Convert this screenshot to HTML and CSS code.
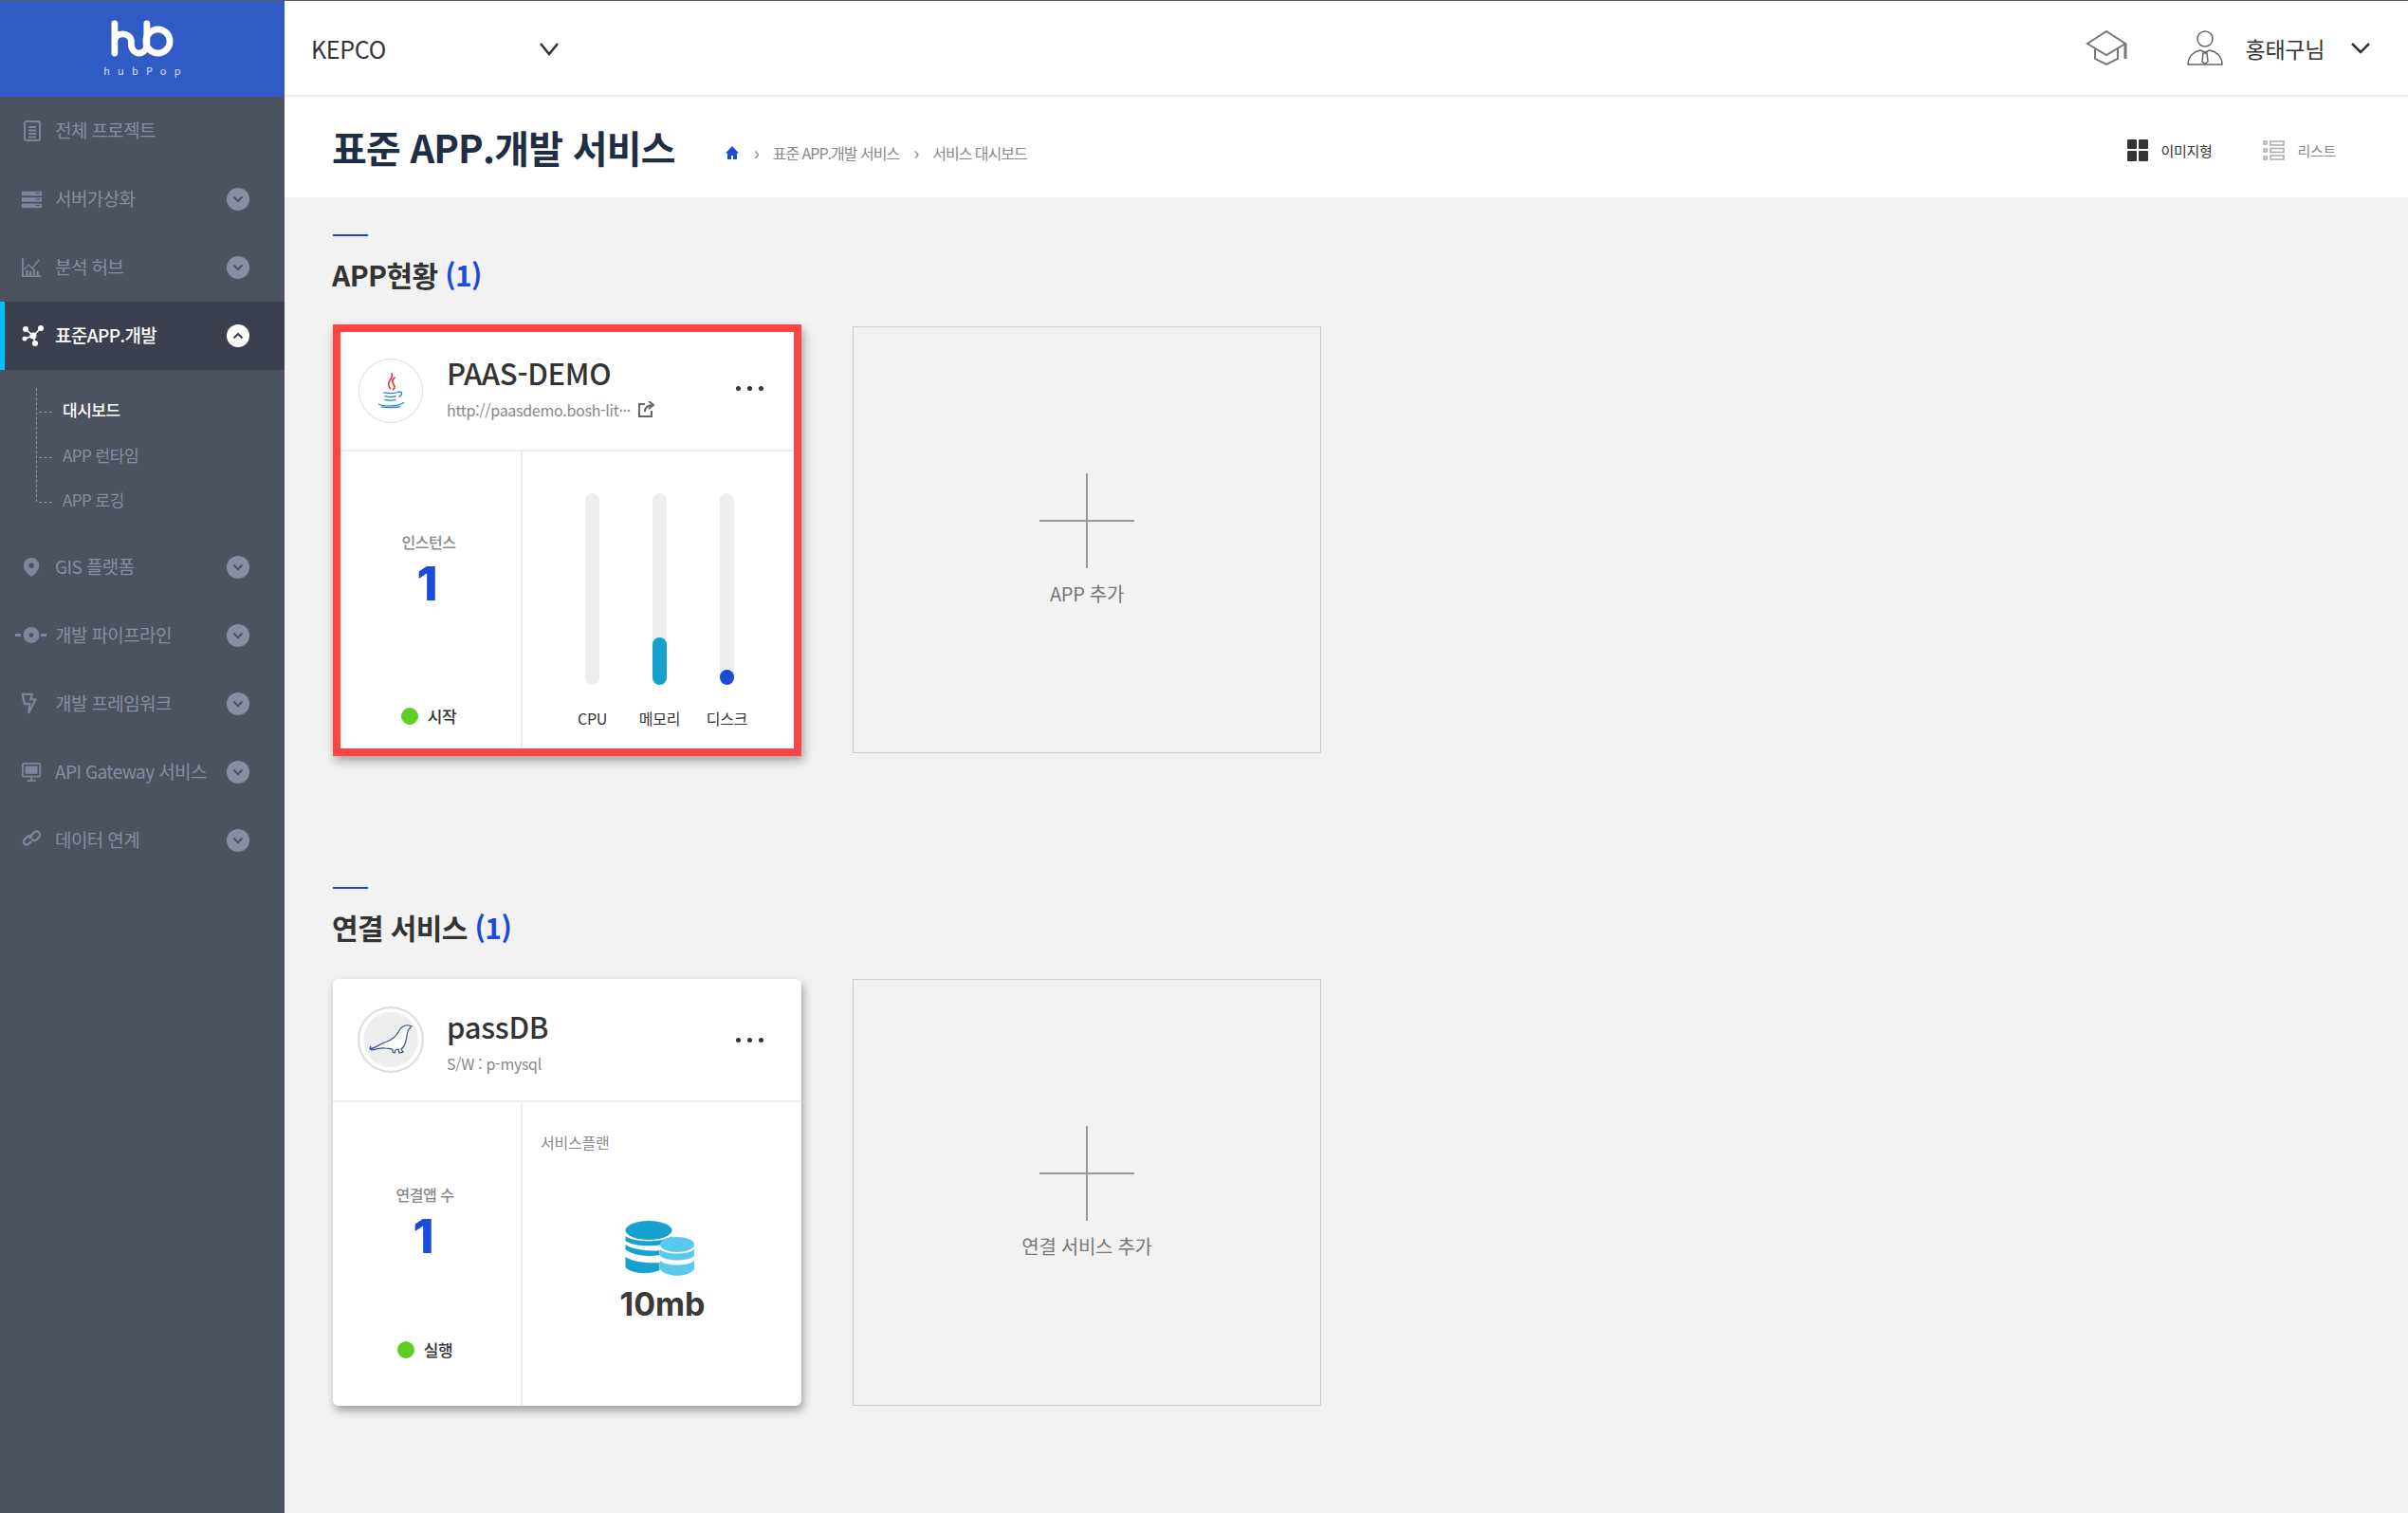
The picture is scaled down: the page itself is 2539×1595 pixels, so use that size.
FILE: index.html
```html
<!DOCTYPE html>
<html lang="ko">
<head>
  <meta charset="utf-8">
  <title>표준 APP.개발 서비스</title>
  <link rel="stylesheet" href="styles.css">
</head>
<body>
<div class="layout">
  <aside class="sidebar">
    <div class="logo">
      <svg class="logo-mark" width="66" height="39" viewBox="0 0 68 40" fill="none" stroke="#fff" stroke-width="7" stroke-linecap="round" stroke-linejoin="round">
        <path d="M4 4V36M4 22C5 13 20 13 22 22V27C23 39 38 39 39 27V4"/>
        <circle cx="51" cy="23" r="13"/>
      </svg>
      <div class="logo-text">hubPop</div>
    </div>
    <ul class="menu">
      <li class="menu-item">
        <svg class="menu-icon" width="22" height="24" viewBox="0 0 22 24" fill="none" stroke="#7d869f" stroke-width="2"><rect x="3" y="2" width="16" height="20" rx="2"/><path d="M7 8h8M7 11.500h8M7 15h8M7 18.500h8M8 2h6"/></svg>
        <span class="menu-label">전체 프로젝트</span>
      </li>
      <li class="menu-item">
        <svg class="menu-icon" width="22" height="24" viewBox="0 0 24 24" fill="#7d869f"><rect x="0" y="3" width="23" height="5"/><rect x="0" y="10" width="23" height="5"/><rect x="0" y="17" width="23" height="5"/><path d="M16 5h5M16 12h5M16 19h5" stroke="#4d5260" stroke-width="1"/></svg>
        <span class="menu-label">서버가상화</span>
        <span class="toggle"><svg width="12" height="8" viewBox="0 0 12 8" fill="none" stroke="#4d5260" stroke-width="2"><path d="M1.500 1.500 6 6l4.500-4.500"/></svg></span>
      </li>
      <li class="menu-item">
        <svg class="menu-icon" width="22" height="24" viewBox="0 0 24 24" fill="none" stroke="#7d869f" stroke-width="2"><path d="M1 1v21h21"/><path d="M3 14l5-5 4 4 8-10" stroke-width="1.500"/><path d="M6 21v-6M10 21v-5M14 21v-7M18 21v-5" stroke-width="2.500"/></svg>
        <span class="menu-label">분석 허브</span>
        <span class="toggle"><svg width="12" height="8" viewBox="0 0 12 8" fill="none" stroke="#4d5260" stroke-width="2"><path d="M1.500 1.500 6 6l4.500-4.500"/></svg></span>
      </li>
      <li class="menu-item active">
        <svg class="menu-icon" width="24" height="24" viewBox="0 0 24 24" fill="#fff"><path d="M4 5l8 7 8-8M3 15l9-3 2 8" fill="none" stroke="#fff" stroke-width="1.500"/><circle cx="4" cy="5" r="3"/><circle cx="20" cy="4" r="3"/><circle cx="12" cy="12" r="3.500"/><circle cx="3" cy="15" r="2.500"/><circle cx="14" cy="20" r="3"/></svg>
        <span class="menu-label">표준APP.개발</span>
        <span class="toggle"><svg width="12" height="8" viewBox="0 0 12 8" fill="none" stroke="#3b3f50" stroke-width="2"><path d="M1.500 6.500 6 2l4.500 4.500"/></svg></span>
      </li>
      <li class="submenu">
        <div class="sub-item current">대시보드</div>
        <div class="sub-item">APP 런타임</div>
        <div class="sub-item">APP 로깅</div>
      </li>
      <li class="menu-item">
        <svg class="menu-icon" width="22" height="24" viewBox="-2 0 24 24" fill="#7d869f"><path fill-rule="evenodd" d="M9 1a9 9 0 0 1 9 9c0 5-5 10-9 13C5 20 0 15 0 10a9 9 0 0 1 9-9zm0 6a3 3 0 1 0 0 6 3 3 0 0 0 0-6z"/></svg>
        <span class="menu-label">GIS 플랫폼</span>
        <span class="toggle"><svg width="12" height="8" viewBox="0 0 12 8" fill="none" stroke="#4d5260" stroke-width="2"><path d="M1.500 1.500 6 6l4.500-4.500"/></svg></span>
      </li>
      <li class="menu-item">
        <svg class="menu-icon pipe" width="34" height="24" viewBox="0 0 34 24" fill="#7d869f"><path d="M0 10h6v3H0zM27 10h6v3h-6z"/><path fill-rule="evenodd" d="M17 3a8.500 8.500 0 1 1 0 17 8.500 8.500 0 0 1 0-17zm0 6a2.500 2.500 0 1 0 0 5 2.500 2.500 0 0 0 0-5z"/></svg>
        <span class="menu-label">개발 파이프라인</span>
        <span class="toggle"><svg width="12" height="8" viewBox="0 0 12 8" fill="none" stroke="#4d5260" stroke-width="2"><path d="M1.500 1.500 6 6l4.500-4.500"/></svg></span>
      </li>
      <li class="menu-item">
        <svg class="menu-icon" width="22" height="24" viewBox="0 0 24 24" fill="none" stroke="#7d869f" stroke-width="2.500" stroke-linejoin="round"><path d="M1 1h11l-2 6h6l-8 15 1-10H3z"/></svg>
        <span class="menu-label">개발 프레임워크</span>
        <span class="toggle"><svg width="12" height="8" viewBox="0 0 12 8" fill="none" stroke="#4d5260" stroke-width="2"><path d="M1.500 1.500 6 6l4.500-4.500"/></svg></span>
      </li>
      <li class="menu-item">
        <svg class="menu-icon" width="22" height="24" viewBox="0 0 24 24" fill="none" stroke="#7d869f" stroke-width="2"><rect x="1" y="2" width="20" height="15" rx="1.500"/><rect x="5" y="6" width="12" height="7" fill="#7d869f"/><path d="M11 17v4M6 22h10"/></svg>
        <span class="menu-label">API Gateway 서비스</span>
        <span class="toggle"><svg width="12" height="8" viewBox="0 0 12 8" fill="none" stroke="#4d5260" stroke-width="2"><path d="M1.500 1.500 6 6l4.500-4.500"/></svg></span>
      </li>
      <li class="menu-item">
        <svg class="menu-icon" width="22" height="24" viewBox="0 0 24 24" fill="none" stroke="#7d869f" stroke-width="2.500" stroke-linecap="round"><path d="M10 14l-2 2a3.500 3.500 0 0 1-5-5l3-3a3.500 3.500 0 0 1 5 0"/><path d="M9 9l2-3 3-3a3.500 3.500 0 0 1 6 5l-3 3a3.500 3.500 0 0 1-5 0"/></svg>
        <span class="menu-label">데이터 연계</span>
        <span class="toggle"><svg width="12" height="8" viewBox="0 0 12 8" fill="none" stroke="#4d5260" stroke-width="2"><path d="M1.500 1.500 6 6l4.500-4.500"/></svg></span>
      </li>
    </ul>
  </aside>

  <div class="main">
    <header class="topbar">
      <div class="org">
        <span class="org-name">KEPCO</span>
        <svg width="22" height="16" viewBox="0 0 22 16" fill="none" stroke="#333" stroke-width="2.500"><path d="M2 3l9 11 9-11"/></svg>
      </div>
      <div class="top-right">
        <svg class="grad" width="46" height="38" viewBox="0 0 46 38" fill="none" stroke="#777" stroke-width="2"><path d="M22 1 2 14l20 12 20-12zM10 19v11l12 6 12-6V19"/><path d="M42 14v16" stroke-width="3"/></svg>
        <svg class="user" width="38" height="38" viewBox="0 0 38 38" fill="none" stroke="#666" stroke-width="1.500"><circle cx="19" cy="9" r="8"/><path d="M1 36c0-9 7-14 13-15l5 2 5-2c6 1 13 6 13 15zM17 24h4l1 9-3 2-3-2z"/></svg>
        <span class="user-name">홍태구님</span>
        <svg width="22" height="14" viewBox="0 0 22 14" fill="none" stroke="#333" stroke-width="2.500"><path d="M2 2l9 9 9-9"/></svg>
      </div>
    </header>

    <div class="titlebar">
      <h1 class="page-title">표준 APP.개발 서비스</h1>
      <nav class="crumbs">
        <svg width="16" height="16" viewBox="0 0 16 16" fill="#1a4bdb"><path d="M8 1 1 8.500h2V15h4v-4h2v4h4V8.500h2z"/></svg>
        <span class="sep">›</span>
        <span>표준 APP.개발 서비스</span>
        <span class="sep">›</span>
        <span>서비스 대시보드</span>
      </nav>
      <div class="views">
        <span class="view on">
          <svg width="22" height="23" viewBox="0 0 22 23" fill="#333"><rect width="10" height="10" rx="1"/><rect x="12" width="10" height="10" rx="1"/><rect y="12" width="10" height="11" rx="1"/><rect x="12" y="12" width="10" height="11" rx="1"/></svg>
          이미지형
        </span>
        <span class="view">
          <svg width="23" height="21" viewBox="0 0 23 21" fill="none" stroke="#aaa" stroke-width="1.500"><path d="M1 1h3v3H1zM1 9h3v3H1zM1 17h3v3H1zM8 1h14v4H8zM8 8.500h14v4H8zM8 16h14v4H8z"/></svg>
          리스트
        </span>
      </div>
    </div>

    <section class="section first">
      <h2 class="section-title">APP현황 <em>(1)</em></h2>
      <div class="cards">
        <article class="card marked">
          <div class="card-head">
            <span class="avatar">
              <svg width="30" height="40" viewBox="0 0 32 42" fill="none" stroke="#2f7fc1" stroke-width="1.300"><path d="M17 1c3 6-6 9-3 15 1 2 2 3 2 3M21 6c-5 3-3 6-1 9 1 2 0 4-2 5" stroke="#e1292b" stroke-width="1.600"/><path d="M8 23c5 1 13 1 17-1 4 0 5 3 0 6M9 27c4 1 9 1 13 0M9 31c4 1 9 1 13 0M2 36c6 3 22 3 29-2M5 39c7 1 15 1 22 0"/></svg>
            </span>
            <div class="card-info">
              <div class="card-name">PAAS-DEMO</div>
              <div class="card-sub">http://paasdemo.bosh-lit···
                <svg width="18" height="18" viewBox="0 0 18 18" fill="none" stroke="#666" stroke-width="2"><path d="M8 3H2v13h13v-6M8 11c0-5 3-7 9-7M12 0l5 4-5 4"/></svg>
              </div>
            </div>
            <span class="dots"><i></i><i></i><i></i></span>
          </div>
          <div class="card-body">
            <div class="stat">
              <div class="stat-label">인스턴스</div>
              <div class="stat-num">1</div>
              <div class="status"><i class="dot"></i>시작</div>
            </div>
            <div class="gauges">
              <div class="gauge"><div class="bar"></div><span>CPU</span></div>
              <div class="gauge"><div class="bar"><i class="fill mem"></i></div><span>메모리</span></div>
              <div class="gauge"><div class="bar"><i class="fill disk"></i></div><span>디스크</span></div>
            </div>
          </div>
        </article>
        <div class="add"><i class="plus"></i><span>APP 추가</span></div>
      </div>
    </section>

    <section class="section">
      <h2 class="section-title">연결 서비스 <em>(1)</em></h2>
      <div class="cards">
        <article class="card">
          <div class="card-head">
            <span class="avatar grey">
              <svg width="46" height="34" viewBox="0 0 46 34" fill="#fff" stroke="#3b4f86" stroke-width="1.200"><path d="M1 27c6-1 11-6 18-8 5-2 9-4 12-10 2-5 7-8 11-7l3 1-3 3c-2 3-2 9-3 12-1 4-2 7-5 9l2 3-4 1-1-4-3 1-1 3-2-1v-3c-3 0-5-1-7-1-6-1-9 1-15 2-1-1-2-3-1-4z"/></svg>
            </span>
            <div class="card-info">
              <div class="card-name">passDB</div>
              <div class="card-sub">S/W : p-mysql</div>
            </div>
            <span class="dots"><i></i><i></i><i></i></span>
          </div>
          <div class="card-body">
            <div class="stat">
              <div class="stat-label">연결앱 수</div>
              <div class="stat-num">1</div>
              <div class="status"><i class="dot"></i>실행</div>
            </div>
            <div class="plan">
              <div class="plan-label">서비스플랜</div>
              <svg class="db" width="74" height="60" viewBox="0 0 74 60">
                <g fill="#17a1cf"><ellipse cx="25" cy="10" rx="24.500" ry="10"/><path d="M0.500 16c8 7 41 7 49 0v5c-8 7-41 7-49 0zM0.500 25c8 7 38 7 36 6v5c-12 2-28 1-36-6zM0.500 38c8 6 28 7 36 6v8c-10 5-30 4-36-3z"/></g>
                <g fill="#5cc8ee"><ellipse cx="55" cy="25" rx="18" ry="8"/><path d="M37 30c6 6 30 6 36 0v7c-6 6-30 6-36 0zM37 42c6 6 30 6 36 0v9c-6 9-30 9-36 0z"/></g>
              </svg>
              <div class="plan-size">10mb</div>
            </div>
          </div>
        </article>
        <div class="add"><i class="plus"></i><span>연결 서비스 추가</span></div>
      </div>
    </section>
  </div>
</div>
</body>
</html>
```

FILE: styles.css
```css
* {
  box-sizing: border-box;
}
html, body {
  margin: 0;
  padding: 0;
}
body {
  font-family: "Noto Sans CJK KR", "Noto Sans", sans-serif;
  color: #333;
  background: #f2f2f2;
}
ul {
  list-style: none;
  margin: 0;
  padding: 0;
}
.layout {
  display: flex;
  min-height: 1595px;
  border-top: 1px solid #555a66;
}
.sidebar {
  width: 300px;
  flex: none;
  background: #4d5260;
}
.logo {
  height: 101px;
  background: #315bc4;
  display: flex;
  flex-direction: column;
  align-items: center;
  padding-top: 20px;
}
.logo-text {
  color: #d8e0f5;
  font-size: 11px;
  letter-spacing: 8.2px;
  line-height: 12px;
  margin-top: 8px;
  margin-left: 8px;
}
.menu-item {
  height: 72px;
  display: flex;
  align-items: center;
  padding-left: 23px;
  position: relative;
  color: #868ea6;
  font-size: 19px;
  letter-spacing: -0.6px;
}
.menu-label {
  padding-bottom: 4px;
}
.menu-icon {
  flex: none;
  margin-right: 13px;
}
.menu-icon.pipe {
  margin-left: -7px;
  margin-right: 8px;
}
.toggle {
  position: absolute;
  left: 239px;
  top: 24px;
  width: 24px;
  height: 24px;
  border-radius: 50%;
  background: #868ea6;
  display: flex;
  align-items: center;
  justify-content: center;
}
.menu-item.active {
  background: #3b3f50;
  border-left: 5px solid #00c0ff;
  padding-left: 18px;
  color: #fff;
  font-weight: 500;
}
.menu-item.active .menu-icon {
  margin-right: 11px;
}
.active .toggle {
  left: 234px;
  background: #fff;
}
.submenu {
  height: 172px;
  padding-top: 18px;
  position: relative;
}
.submenu:before {
  content: "";
  position: absolute;
  left: 38px;
  top: 19px;
  height: 120px;
  border-left: 1px dashed #8a90a2;
}
.sub-item {
  height: 47.500px;
  line-height: 47.500px;
  padding-left: 66px;
  color: #868ea6;
  font-size: 17px;
  letter-spacing: -0.5px;
  position: relative;
}
.sub-item:before {
  content: "";
  position: absolute;
  left: 41px;
  top: 26px;
  width: 14px;
  border-top: 1px dashed #8a90a2;
}
.sub-item.current {
  color: #fff;
  font-weight: 500;
}
.main {
  flex: 1;
  min-width: 0;
}
.topbar {
  height: 101px;
  background: #fff;
  border-bottom: 2px solid #eee;
  display: flex;
  align-items: center;
  justify-content: space-between;
  padding: 0 39px 0 28px;
}
.org {
  display: flex;
  align-items: center;
  width: 262px;
  justify-content: space-between;
  font-size: 25px;
  letter-spacing: -0.3px;
}
.top-right {
  display: flex;
  align-items: center;
  font-size: 23px;
  letter-spacing: -0.3px;
}
.grad {
  margin-right: 61px;
}
.user {
  margin-right: 24px;
}
.user-name {
  margin-right: 27px;
}
.titlebar {
  height: 106px;
  background: #fff;
  display: flex;
  align-items: center;
  padding: 0 76px 0 50px;
}
.page-title {
  margin: 0 52px 0 0;
  font-size: 40px;
  font-weight: 700;
  letter-spacing: -0.8px;
  color: #1f2d45;
}
.crumbs {
  display: flex;
  align-items: center;
  gap: 15px;
  font-size: 16px;
  letter-spacing: -1px;
  color: #888;
  margin-top: 12px;
}
.crumbs .sep {
  color: #888;
  font-size: 20px;
  line-height: 20px;
}
.views {
  margin-left: auto;
  display: flex;
  gap: 54px;
  font-size: 15px;
  letter-spacing: -0.3px;
  color: #888;
  margin-top: 6px;
}
.view {
  display: flex;
  align-items: center;
  gap: 13px;
}
.view.on {
  color: #333;
}
.section {
  padding: 0 0 0 51px;
  margin-top: 136px;
}
.section.first {
  margin-top: 37px;
}
.section-title {
  margin: 0 0 29px -1px;
  padding-top: 2px;
  font-size: 30px;
  line-height: 52px;
  font-weight: 700;
  letter-spacing: -0.6px;
  position: relative;
}
.section-title:before {
  content: "";
  display: block;
  width: 37px;
  margin-left: 1px;
  border-top: 2px solid #1a4bdb;
  margin-bottom: 14px;
}
.section-title em {
  font-style: normal;
  color: #1a4bdb;
}
.cards {
  display: flex;
  gap: 54px;
  align-items: flex-start;
}
.card {
  width: 494px;
  height: 450px;
  background: #fff;
  border-radius: 6px;
  box-shadow: 2px 5px 10px rgba(0, 0, 0, 0.35);
  display: flex;
  flex-direction: column;
}
.card.marked {
  border: 8px solid #ff4444;
  border-radius: 0;
  height: 455px;
  margin-top: -2px;
}
.card-head {
  height: 130px;
  flex: none;
  border-bottom: 2px solid #eee;
  display: flex;
  align-items: center;
  padding: 0 40px 0 27px;
  position: relative;
}
.marked .card-head {
  height: 126px;
  padding: 0 32px 0 19px;
}
.marked .card-info {
  margin-top: -9px;
}
.marked .dots {
  margin-top: -6px;
}
.avatar {
  width: 68px;
  height: 68px;
  flex: none;
  border-radius: 50%;
  border: 1px solid #ddd;
  display: flex;
  align-items: center;
  justify-content: center;
  margin-right: 25px;
}
.avatar.grey {
  background: #eee;
  box-shadow: 0 0 0 4px #fff inset, 0 0 0 1px #ddd;
}
.card-info {
  flex: 1;
}
.card-name {
  font-size: 31px;
  font-weight: 500;
  line-height: 44px;
  letter-spacing: -0.3px;
}
.card-sub {
  font-size: 16px;
  line-height: 24px;
  letter-spacing: -0.3px;
  color: #888;
  margin-top: 5px;
  display: flex;
  align-items: center;
  gap: 7px;
}
.dots {
  display: flex;
  gap: 7px;
  margin-top: 1px;
}
.dots i {
  width: 5px;
  height: 5px;
  border-radius: 50%;
  background: #333;
}
.card-body {
  flex: 1;
  display: flex;
  min-height: 0;
}
.stat {
  width: 200px;
  flex: none;
  border-right: 2px solid #eee;
  display: flex;
  flex-direction: column;
  align-items: center;
  padding: 86px 4px 0 0;
}
.marked .stat {
  width: 192px;
  padding-top: 84px;
}
.stat-label {
  font-size: 16px;
  line-height: 22px;
  color: #888;
  font-weight: 500;
  letter-spacing: -0.5px;
}
.stat-num {
  font-family: Inter, sans-serif;
  font-size: 50px;
  line-height: 52px;
  margin-top: 7px;
  font-weight: 800;
  color: #1a4bdb;
  margin-left: -3px;
}
.status {
  margin-top: 81px;
  display: flex;
  align-items: center;
  gap: 10px;
  font-size: 17px;
  font-weight: 500;
  letter-spacing: -0.5px;
}
.marked .status {
  margin-top: 101px;
}
.dot {
  width: 18px;
  height: 18px;
  border-radius: 50%;
  background: #5bcf24;
}
.gauges {
  flex: 1;
  display: flex;
  padding: 44px 0 0 38px;
}
.gauge {
  width: 71px;
  display: flex;
  flex-direction: column;
  align-items: center;
  font-size: 16px;
  letter-spacing: -0.3px;
}
.bar {
  width: 15px;
  height: 202px;
  background: #eee;
  border-radius: 8px;
  position: relative;
  margin-bottom: 23px;
}
.fill {
  position: absolute;
  left: 0;
  bottom: 0;
  width: 15px;
  border-radius: 8px;
}
.fill.mem {
  height: 50px;
  background: #17a1cf;
}
.fill.disk {
  height: 16px;
  background: #1a4bdb;
}
.plan {
  flex: 1;
  padding: 30px 0 0 19px;
  position: relative;
}
.plan-label {
  font-size: 16px;
  line-height: 24px;
  color: #888;
  letter-spacing: -0.2px;
}
.db {
  display: block;
  margin: 71px 0 0 89px;
}
.plan-size {
  font-family: Inter, sans-serif;
  font-size: 34px;
  font-weight: 700;
  line-height: 40px;
  text-align: center;
  padding-right: 18px;
  margin-top: 8px;
  color: #3a3a3a;
}
.add {
  width: 494px;
  height: 450px;
  border: 1px solid #ccc;
  display: flex;
  flex-direction: column;
  align-items: center;
  padding-top: 154px;
  font-size: 20px;
  letter-spacing: -0.3px;
  color: #777;
}
.plus {
  width: 100px;
  height: 100px;
  background: linear-gradient(#999, #999) center / 100% 2px no-repeat,
    linear-gradient(#999, #999) center / 2px 100% no-repeat;
  margin-bottom: 12px;
}
```
